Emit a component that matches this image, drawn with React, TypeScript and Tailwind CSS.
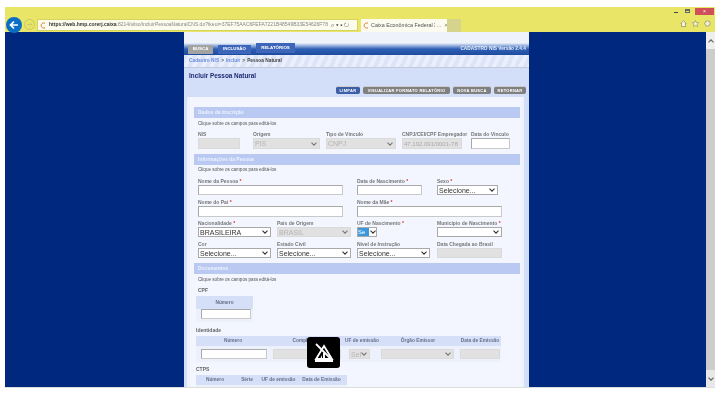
import React from "react";

const Chev = ({ c = "#444" }: { c?: string }) => (
  <svg width="6" height="4" viewBox="0 0 6 4" className="shrink-0">
    <path d="M0.5 0.7 L3 3.2 L5.5 0.7" fill="none" stroke={c} strokeWidth="1.1" />
  </svg>
);

const Label = ({ t, req }: { t: string; req?: boolean }) => (
  <div className="h-[6px] text-[5px] leading-[6px] font-bold text-[#777] whitespace-nowrap">
    {t}
    {req && <span className="text-[#e03030]"> *</span>}
  </div>
);

const Input = ({ cls, v, off }: { cls: string; v?: string; off?: boolean }) => (
  <div
    className={`${cls} flex items-center px-[1px] text-[6px] leading-none whitespace-nowrap overflow-hidden border ${
      off ? "bg-[#e1e1e1] border-[#dadada] text-[#aaa]" : "bg-white border-[#a9a9a9] border-b-[#c9c9c9] border-r-[#c9c9c9]"
    }`}
  >
    {v}
  </div>
);

const Select = ({ cls, v, off }: { cls: string; v?: string; off?: boolean }) => (
  <div
    className={`${cls} flex items-center justify-between px-[1px] pr-[2px] text-[7px] leading-none whitespace-nowrap overflow-hidden border ${
      off ? "bg-[#e1e1e1] border-[#dadada] text-[#b4b4b4]" : "bg-white border-[#a9a9a9] text-[#333]"
    }`}
  >
    <span>{v}</span>
    <Chev c={off ? "#777" : "#333"} />
  </div>
);

const Bar = ({ t }: { t: string }) => (
  <div className="h-[11px] ml-[7px] w-[326px] bg-[#b9c9f2] flex items-center pl-[4px] text-[5px] font-bold text-[#eef2ff]">{t}</div>
);

const Hint = () => <div className="h-[6px] text-[4.6px] leading-[6px] text-[#555] ml-[11px]">Clique sobre os campos para editá-los</div>;

const Th = ({ cls, t }: { cls: string; t: string }) => (
  <div className={`${cls} shrink-0 flex items-center justify-center text-[4.8px] font-bold text-[#68708c] whitespace-nowrap`}>{t}</div>
);

const Btn = ({ t, cls }: { t: string; cls: string }) => (
  <div className={`${cls} h-[8px] rounded-[2px] flex items-center justify-center text-[4px] font-bold tracking-[0.3px] text-white whitespace-nowrap border-t border-[#ccc]`}>{t}</div>
);

export default function App() {
  return (
    <div className="w-[722px] h-[402px] bg-white overflow-hidden pt-[7px] pl-[5px] relative blur-[0.5px]" style={{ fontFamily: '"Liberation Sans", Arial, sans-serif' }}>
      <div className="w-[710px]">
        {/* browser chrome */}
        <div className="h-[25px] bg-[#e9e667] flex relative">
          <div className="w-[16px] h-[16px] mt-[10px] ml-[1px] rounded-full bg-[#0a6fc4] flex items-center justify-center">
            <svg width="10" height="10" viewBox="0 0 10 10">
              <path d="M9 5H2M5 1.5L1.5 5L5 8.5" fill="none" stroke="#fff" strokeWidth="1.7" />
            </svg>
          </div>
          <div className="w-[11px] h-[11px] mt-[12px] ml-[2px] rounded-full border border-[#c9c66a] flex items-center justify-center">
            <svg width="7" height="7" viewBox="0 0 7 7">
              <path d="M1 3.5H6M4 1.5L6 3.5L4 5.5" fill="none" stroke="#c9c66a" strokeWidth="0.8" />
            </svg>
          </div>
          <div className="w-[321px] h-[12px] mt-[12px] ml-[2px] bg-[#fbfbee] border border-[#d6d35e] flex items-center pl-[2px] text-[5px] whitespace-nowrap overflow-hidden">
            <svg width="6" height="7" viewBox="0 0 6 7" className="mr-[3px] shrink-0">
              <path d="M5 1.2A2.6 2.6 0 1 0 5 5.8" fill="none" stroke="#e27a3a" strokeWidth="1" />
            </svg>
            <span className="font-bold text-[#333]">https://web.hmp.corerj.caixa</span>
            <span className="text-[#888]">:8214/siiso/incluirPessoaNaturalCNS.do?tkeut=37EF75AAC6FEFA7221B48549B33E54626F78</span>
            <span className="ml-[3px] text-[#444] text-[6px]">⌕ ▾ ▪ ↻</span>
          </div>
          <div className="w-[86px] h-[13px] mt-[12px] ml-[3px] bg-[#fbfbf0] flex items-center pl-[2px] text-[5.4px] text-[#555] whitespace-nowrap">
            <svg width="6" height="7" viewBox="0 0 6 7" className="mr-[2px] shrink-0">
              <path d="M5 1.2A2.6 2.6 0 1 0 5 5.8" fill="none" stroke="#e27a3a" strokeWidth="1" />
            </svg>
            Caixa Econômica Federal ⁝ ...
            <span className="ml-[3px] text-[#888]">✕</span>
          </div>
          <div className="w-[14px] h-[13px] mt-[12px] bg-[#d6d38d]" />
          <div className="absolute right-[1px] top-[1px] w-[19px] h-[7px] bg-[#cf5058] flex items-center justify-center text-[5px] text-white leading-none">×</div>
          <div className="absolute right-[25px] top-[2px] w-[5px] h-[4px] border border-[#666] border-t-[2px]" />
          <div className="absolute right-[37px] top-[5px] w-[4px] h-[1px] bg-[#444]" />
          <div className="absolute right-[4px] top-[13px] flex gap-[5px] items-center">
            <svg width="7" height="7" viewBox="0 0 7 7">
              <path d="M0.5 3.5L3.5 0.8L6.5 3.5M1.5 3.2V6.5H5.5V3.2" fill="#f6f6d8" stroke="#8a8a6a" strokeWidth="0.7" />
            </svg>
            <svg width="7" height="7" viewBox="0 0 7 7">
              <path d="M3.5 0.5L4.4 2.6L6.7 2.8L5 4.3L5.5 6.6L3.5 5.4L1.5 6.6L2 4.3L0.3 2.8L2.6 2.6Z" fill="#f6f6d8" stroke="#8a8a6a" strokeWidth="0.6" />
            </svg>
            <svg width="7" height="7" viewBox="0 0 7 7">
              <circle cx="3.5" cy="3.5" r="2.7" fill="#f0f0c8" stroke="#9a9a7a" strokeWidth="0.9" />
            </svg>
          </div>
        </div>

        {/* viewport */}
        <div className="flex h-[355px]">
          <div className="w-[179px] bg-[#00287f]" />
          <div className="w-[345px] bg-[#d3def9] overflow-hidden">
            <div className="h-[11px] bg-[#eef2fb]" />
            {/* tabs */}
            <div className="h-[12px] flex items-end pl-[4px] gap-[5px] bg-gradient-to-b from-[#eef2fb] via-[#2f5fb4] to-[#1c4a9e] relative">
              <div className="w-[25px] h-[9px] mb-[1px] bg-[#a3a3a3] flex items-center justify-center text-[4.4px] font-bold text-white">BUSCA</div>
              <div className="w-[33px] h-[9px] mb-[1px] bg-[#3d66bb] flex items-center justify-center text-[4.4px] font-bold text-white">INCLUSÃO</div>
              <div className="w-[39px] h-[10px] mb-[2px] bg-[#3d66bb] flex items-center justify-center text-[4.4px] font-bold text-white">RELATÓRIOS</div>
              <div className="absolute right-[3px] top-[2px] text-[4.8px] font-bold text-[#e6ebf8] whitespace-nowrap">CADASTRO NIS Versão 2.4.4</div>
            </div>
            {/* breadcrumb */}
            <div className="h-[13px] flex items-center pl-[5px] text-[4.8px] font-bold border-b border-[#c4cbdd] bg-[repeating-linear-gradient(115deg,#dce4f7_0px,#dce4f7_4px,#eaeffb_4px,#eaeffb_8px)]">
              <span className="text-[#6b8be0]">Cadastro NIS</span>
              <span className="text-[#555] mx-[2px]">&gt;</span>
              <span className="text-[#6b8be0]">Incluir</span>
              <span className="text-[#555] mx-[2px]">&gt;</span>
              <span className="text-[#444]">Pessoa Natural</span>
            </div>
            {/* title */}
            <div className="h-[29px] relative">
              <div className="pl-[5px] pt-[4px] text-[6.4px] leading-[8px] font-bold text-[#1d2a70]">Incluir Pessoa Natural</div>
              <div className="absolute top-[18px] left-[152px] flex gap-[3px]">
                <Btn t="LIMPAR" cls="w-[24px] bg-[#3c5fa8]" />
                <Btn t="VISUALIZAR FORMATO RELATÓRIO" cls="w-[87px] bg-[#808080]" />
                <Btn t="NOVA BUSCA" cls="w-[38px] bg-[#808080]" />
                <Btn t="RETORNAR" cls="w-[32px] bg-[#808080]" />
              </div>
            </div>
            {/* form */}
            <div className="ml-[3px] w-[337px] h-[290px] bg-[#f3f6ff] border-x-[3px] border-x-[#eef2ff] pt-[10px] overflow-hidden">
              <div className="-ml-[3px]">
                <Bar t="Dados da Inscrição" />
                <div className="mt-[3px]"><Hint /></div>
                <div className="flex ml-[11px] mt-[4px]">
                  <div className="w-[55px]">
                    <Label t="NIS" />
                    <Input cls="w-[42px] h-[11px] mt-[1px]" off />
                  </div>
                  <div className="w-[73px]">
                    <Label t="Origem" />
                    <Select cls="w-[67px] h-[11px] mt-[1px]" v="PIS" off />
                  </div>
                  <div className="w-[76px]">
                    <Label t="Tipo de Vínculo" />
                    <Select cls="w-[70px] h-[11px] mt-[1px]" v="CNPJ" off />
                  </div>
                  <div className="w-[69px]">
                    <Label t="CNPJ/CEI/CPF Empregador" />
                    <Input cls="w-[60px] h-[11px] mt-[1px]" v="47.192.091/0001-78" off />
                  </div>
                  <div className="w-[40px]">
                    <Label t="Data do Vínculo" />
                    <Input cls="w-[39px] h-[11px] mt-[1px]" />
                  </div>
                </div>

                <div className="mt-[5px]"><Bar t="Informações da Pessoa" /></div>
                <div className="mt-[2px]"><Hint /></div>
                <div className="flex ml-[11px] mt-[5px]">
                  <div className="w-[159px]">
                    <Label t="Nome da Pessoa" req />
                    <Input cls="w-[145px] h-[10px] mt-[1px]" />
                  </div>
                  <div className="w-[80px]">
                    <Label t="Data de Nascimento" req />
                    <Input cls="w-[65px] h-[10px] mt-[1px]" />
                  </div>
                  <div>
                    <Label t="Sexo" req />
                    <Select cls="w-[61px] h-[10px] mt-[1px]" v="Selecione..." />
                  </div>
                </div>
                <div className="flex ml-[11px] mt-[4px]">
                  <div className="w-[159px]">
                    <Label t="Nome do Pai" req />
                    <Input cls="w-[145px] h-[11px] mt-[1px]" />
                  </div>
                  <div>
                    <Label t="Nome da Mãe" req />
                    <Input cls="w-[145px] h-[11px] mt-[1px]" />
                  </div>
                </div>
                <div className="flex ml-[11px] mt-[3px]">
                  <div className="w-[79px]">
                    <Label t="Nacionalidade" req />
                    <Select cls="w-[73px] h-[10px] mt-[1px]" v="BRASILEIRA" />
                  </div>
                  <div className="w-[80px]">
                    <Label t="País de Origem" />
                    <Select cls="w-[74px] h-[10px] mt-[1px]" v="BRASIL" off />
                  </div>
                  <div className="w-[80px]">
                    <Label t="UF de Nascimento" req />
                    <div className="w-[20px] h-[10px] mt-[1px] flex border border-[#a9a9a9] bg-white items-center">
                      <span className="w-[11px] h-full bg-[#3b98dc] text-white text-[6px] leading-[8px]">Se</span>
                      <span className="ml-[1px]"><Chev c="#333" /></span>
                    </div>
                  </div>
                  <div>
                    <Label t="Município de Nascimento" req />
                    <Select cls="w-[65px] h-[10px] mt-[1px]" />
                  </div>
                </div>
                <div className="flex ml-[11px] mt-[4px]">
                  <div className="w-[79px]">
                    <Label t="Cor" />
                    <Select cls="w-[73px] h-[10px] mt-[1px]" v="Selecione..." />
                  </div>
                  <div className="w-[80px]">
                    <Label t="Estado Civil" />
                    <Select cls="w-[74px] h-[10px] mt-[1px]" v="Selecione..." />
                  </div>
                  <div className="w-[80px]">
                    <Label t="Nível de Instrução" />
                    <Select cls="w-[73px] h-[10px] mt-[1px]" v="Selecione..." />
                  </div>
                  <div>
                    <Label t="Data Chegada ao Brasil" />
                    <Input cls="w-[65px] h-[10px] mt-[1px]" off />
                  </div>
                </div>

                <div className="mt-[5px]"><Bar t="Documentos" /></div>
                <div className="mt-[3px]"><Hint /></div>
                <div className="ml-[11px] mt-[4px] h-[6px] text-[5px] leading-[6px] font-bold text-[#666]">CPF</div>

                <div className="ml-[9px] mt-[3px] w-[57px] h-[26px] bg-[#edf1fc]">
                  <Th cls="w-full h-[13px] bg-[#d5dff8]" t="Número" />
                  <Input cls="w-[50px] h-[10px] ml-[5px]" />
                </div>

                <div className="ml-[9px] mt-[5px] h-[6px] text-[5px] leading-[6px] font-bold text-[#666]">Identidade</div>
                <div className="ml-[9px] mt-[3px] w-[305px] h-[26px] bg-[#edf1fc]">
                  <div className="flex h-[10px] bg-[#d5dff8]">
                    <Th cls="w-[74px]" t="Número" />
                    <Th cls="w-[77px]" t="Complemento" />
                    <Th cls="w-[30px]" t="UF de emissão" />
                    <Th cls="w-[82px]" t="Órgão Emissor" />
                    <Th cls="w-[42px]" t="Data de Emissão" />
                  </div>
                  <div className="flex items-center h-[16px] pl-[5px]">
                    <Input cls="w-[66px] h-[10px]" />
                    <Input cls="w-[68px] h-[10px] ml-[6px]" off />
                    <Select cls="w-[21px] h-[10px] ml-[8px]" v="Sel" off />
                    <Select cls="w-[73px] h-[10px] ml-[11px]" off />
                    <Input cls="w-[40px] h-[10px] ml-[6px]" off />
                  </div>
                </div>

                <div className="ml-[9px] mt-[4px] h-[6px] text-[5px] leading-[6px] font-bold text-[#666]">CTPS</div>
                <div className="ml-[9px] mt-[3px] w-[151px] h-[16px] bg-[#edf1fc]">
                  <div className="flex h-[10px] bg-[#d5dff8]">
                    <Th cls="w-[38px]" t="Número" />
                    <Th cls="w-[26px]" t="Série" />
                    <Th cls="w-[37px]" t="UF de emissão" />
                    <Th cls="w-[49px]" t="Data de Emissão" />
                  </div>
                </div>
              </div>
            </div>
          </div>
          <div className="w-[177px] bg-[#00287f]" />
          <div className="w-[9px] bg-[#cdcdcd] flex flex-col justify-between">
            <div className="h-[17px] bg-[#eeeeee] flex items-center justify-center">
              <svg width="6" height="4" viewBox="0 0 6 4"><path d="M0.5 3.3L3 0.8L5.5 3.3" fill="none" stroke="#666" strokeWidth="1.2" /></svg>
            </div>
            <div className="h-[17px] bg-[#e8e8e8] flex items-center justify-center">
              <svg width="6" height="4" viewBox="0 0 6 4"><path d="M0.5 0.7L3 3.2L5.5 0.7" fill="none" stroke="#666" strokeWidth="1.2" /></svg>
            </div>
          </div>
        </div>
      </div>

      {/* bottom hairline */}
      <div className="absolute left-[5px] top-[387px] w-[710px] h-[1px] bg-[#dddddd]" />

      {/* overlay */}
      <div className="absolute left-[307px] top-[337px] w-[33px] h-[31px] rounded-[3px] bg-black flex items-center justify-center">
        <svg width="22" height="22" viewBox="0 0 22 22">
          <path d="M11 4L19 17H3Z" fill="none" stroke="#fff" strokeWidth="1.8" />
          <path d="M2 19H20" stroke="#fff" strokeWidth="2" />
          <path d="M3 2L19 18" stroke="#fff" strokeWidth="1.8" />
          <path d="M10 11H12V17H10Z" fill="#fff" />
          <path d="M7 17L9 13V17Z" fill="#fff" />
        </svg>
      </div>
    </div>
  );
}
